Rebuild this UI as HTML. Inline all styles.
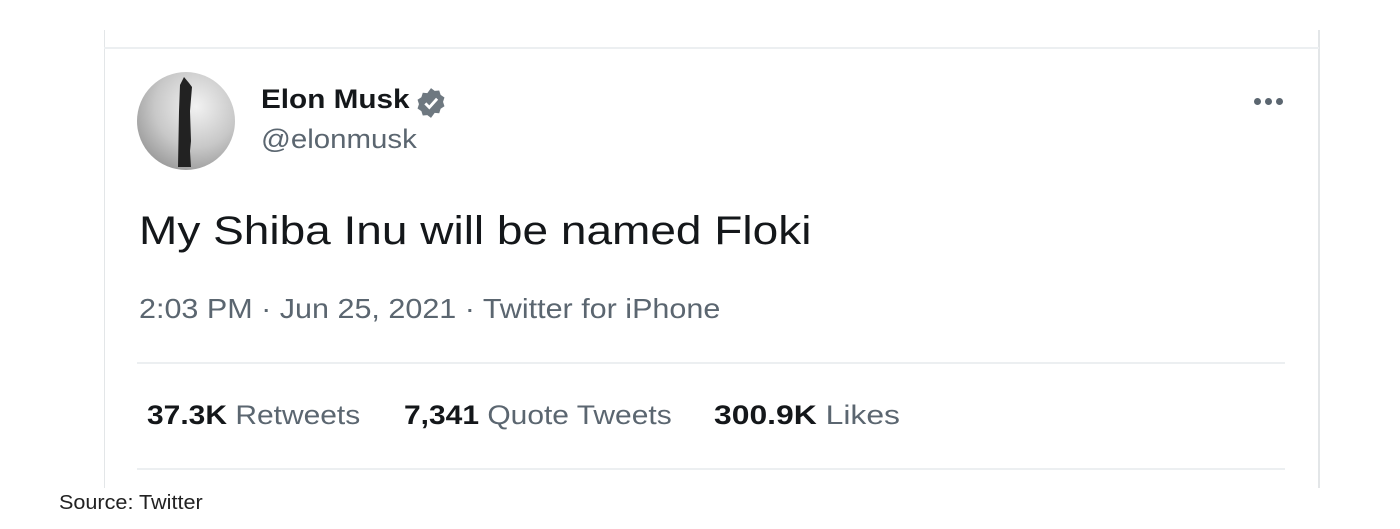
<!DOCTYPE html>
<html><head><meta charset="utf-8"><style>
body{margin:0;width:1400px;height:529px;background:#fff;position:relative;overflow:hidden;font-family:"Liberation Sans",Arial,sans-serif;}
.a{position:absolute;white-space:nowrap;transform-origin:0 0;}
</style></head><body>
<div class="a" style="left:104px;top:30px;width:1px;height:458px;background:#e3e6e8"></div>
<div class="a" style="left:1318px;top:30px;width:2px;height:458px;background:#e3e6e8"></div>
<div class="a" style="left:104px;top:47px;width:1215px;height:2px;background:#eceff1"></div>
<div class="a" style="left:137px;top:362px;width:1148px;height:2px;background:#eceff1"></div>
<div class="a" style="left:137px;top:468px;width:1148px;height:2px;background:#eceff1"></div>
<svg class="a" style="left:136px;top:71px" width="100" height="100" viewBox="0 0 100 100">
<defs><radialGradient id="g" cx="0.6" cy="0.35" r="0.7"><stop offset="0" stop-color="#f2f2f2"/><stop offset="0.6" stop-color="#c8c8c8"/><stop offset="1" stop-color="#9a9a9a"/></radialGradient></defs>
<circle cx="50" cy="50" r="49" fill="url(#g)"/>
<path d="M48 6 L44 14 L43 40 L42 96 L55 96 L54 80 L55 70 L54 40 L56 16 L53 12 Z" fill="#222"/>
</svg>
<div class="a" style="left:261px;top:84px;font-size:27px;font-weight:bold;color:#14171a;transform:scaleX(1.1)">Elon Musk</div>
<svg class="a" style="left:414px;top:86px" width="34" height="34" viewBox="0 0 24 24"><path d="M12 1.5l2.6 1.9 3.2-.2 1 3.1 2.7 1.8-1 3.1 1 3.1-2.7 1.8-1 3.1-3.2-.2L12 22.5l-2.6-1.9-3.2.2-1-3.1-2.7-1.8 1-3.1-1-3.1 2.7-1.8 1-3.1 3.2.2z" fill="#6e7880"/><path d="M8 12.3l2.8 2.8L16.3 9" stroke="#fff" stroke-width="2" fill="none"/></svg>
<div class="a" style="left:261px;top:124px;font-size:27px;color:#5b6670;transform:scaleX(1.09)">@elonmusk</div>
<div class="a" style="left:1254px;top:97px;font-size:10px;"><span style="display:inline-block;width:7px;height:7px;border-radius:50%;background:#5b6670;margin-right:4px"></span><span style="display:inline-block;width:7px;height:7px;border-radius:50%;background:#5b6670;margin-right:4px"></span><span style="display:inline-block;width:7px;height:7px;border-radius:50%;background:#5b6670"></span></div>
<div class="a" style="left:139px;top:209px;font-size:40px;color:#14171a;transform:scaleX(1.15)">My Shiba Inu will be named Floki</div>
<div class="a" style="left:139px;top:293px;font-size:28px;color:#5b6670;transform:scaleX(1.09)">2:03 PM · Jun 25, 2021 · Twitter for iPhone</div>
<div class="a" style="left:147px;top:400px;font-size:27px;color:#5b6670;transform:scaleX(1.11)"><b style="color:#14171a">37.3K</b> Retweets</div>
<div class="a" style="left:404px;top:400px;font-size:27px;color:#5b6670;transform:scaleX(1.11)"><b style="color:#14171a">7,341</b> Quote Tweets</div>
<div class="a" style="left:714px;top:400px;font-size:27px;color:#5b6670;transform:scaleX(1.18)"><b style="color:#14171a">300.9K</b> Likes</div>
<div class="a" style="left:59px;top:492px;font-size:20px;color:#222;transform:scaleX(1.08)">Source: Twitter</div>
</body></html>
